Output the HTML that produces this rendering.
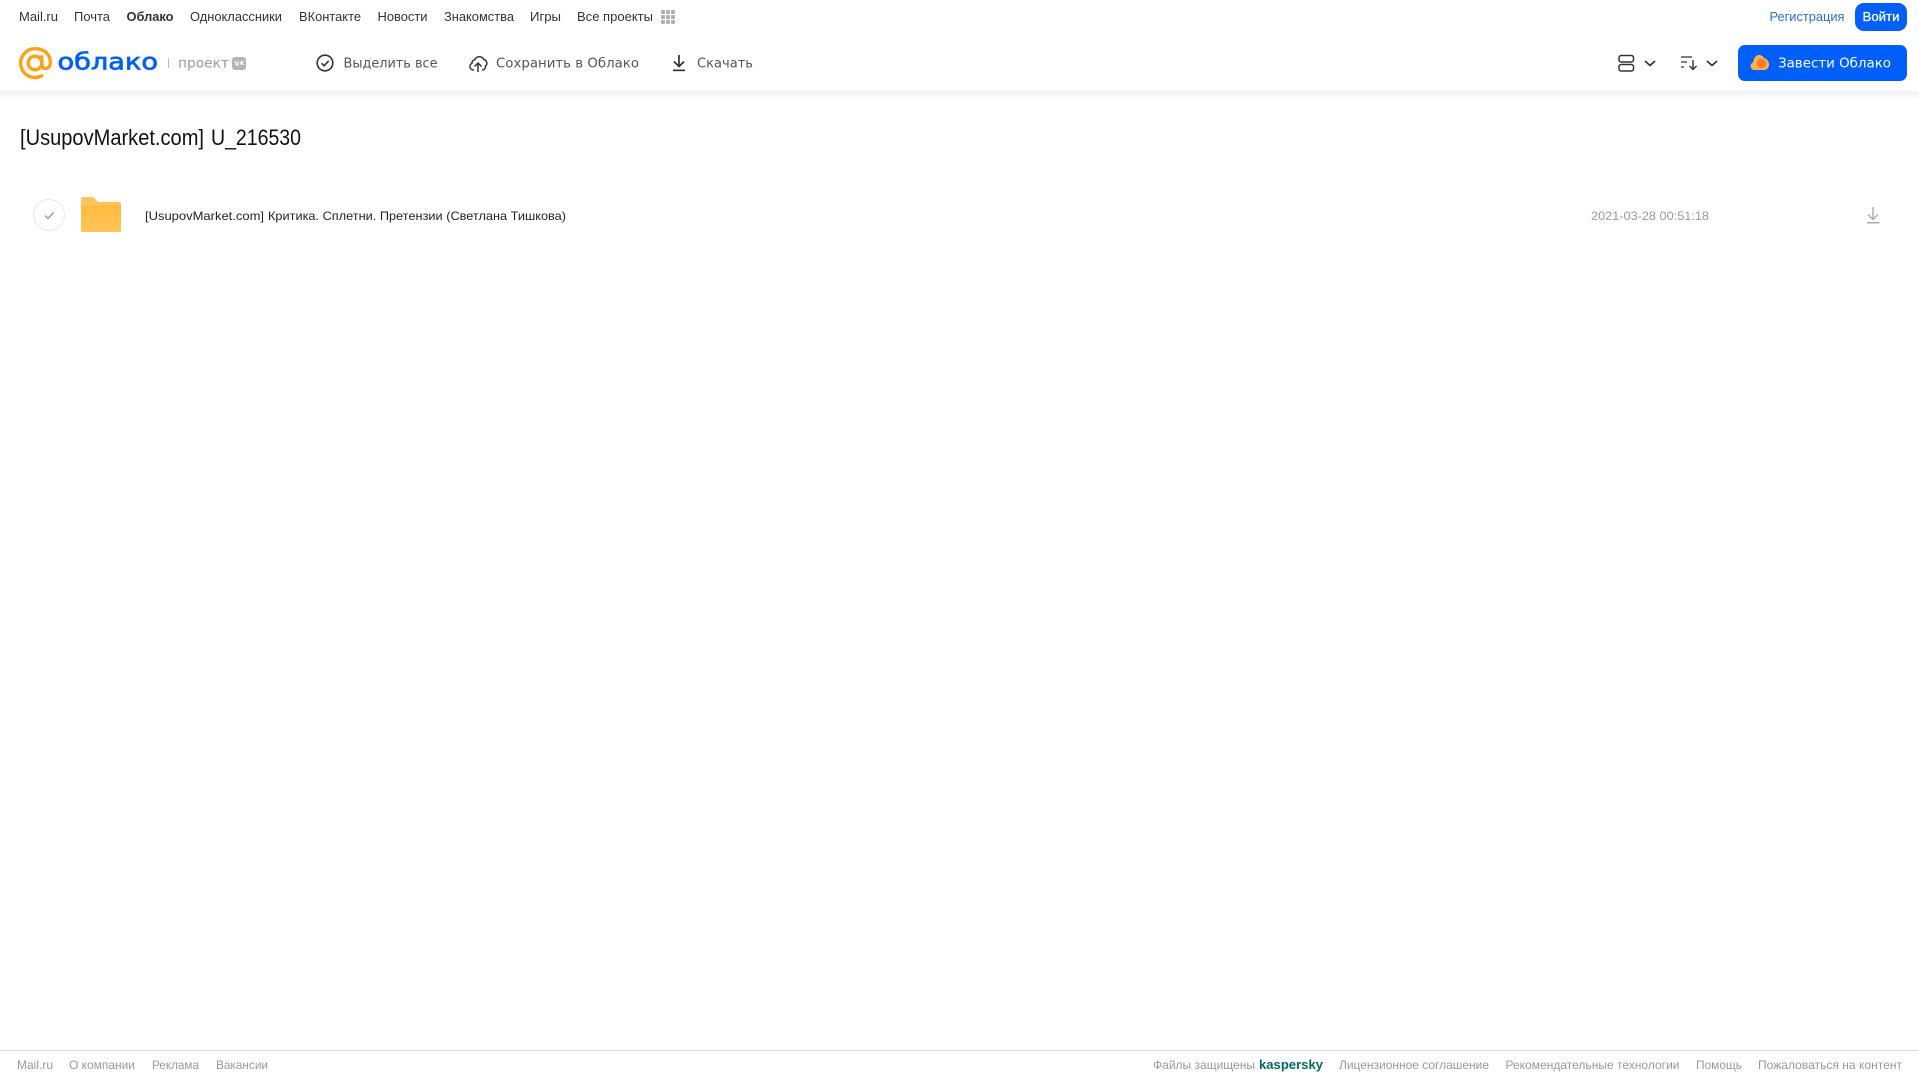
<!DOCTYPE html>
<html lang="ru">
<head>
<meta charset="utf-8">
<title>[UsupovMarket.com] U_216530</title>
<style>
html,body{margin:0;padding:0;width:1919px;height:1079px;overflow:hidden;background:#fff}
svg{display:block;position:absolute;left:0;top:0}
text{font-family:"Liberation Sans",sans-serif}
.nav{font-size:13px;fill:#333}
.act{font-family:"DejaVu Sans",sans-serif;font-size:13px;fill:#555}
.foot{font-size:12px;fill:#999}
</style>
</head>
<body>
<svg width="1919" height="1079" viewBox="0 0 1919 1079" xmlns="http://www.w3.org/2000/svg">
<defs>
<linearGradient id="sh" x1="0" y1="0" x2="0" y2="1"><stop offset="0" stop-color="#f0f0f0"/><stop offset="1" stop-color="#fff"/></linearGradient>
<linearGradient id="fb" x1="0" y1="0" x2="0" y2="1"><stop offset="0" stop-color="#ffbb3f"/><stop offset="1" stop-color="#ffc558"/></linearGradient>
</defs>
<rect width="1919" height="1079" fill="#fff"/>
<rect x="0" y="91" width="1919" height="9" fill="url(#sh)"/>

<!-- top nav -->
<text class="nav" x="19" y="21" textLength="39" lengthAdjust="spacingAndGlyphs">Mail.ru</text>
<text class="nav" x="74" y="21" textLength="36" lengthAdjust="spacingAndGlyphs">Почта</text>
<text class="nav" x="126.500" y="21" textLength="47" lengthAdjust="spacingAndGlyphs" font-weight="700" style="fill:#333">Облако</text>
<text class="nav" x="190" y="21" textLength="92" lengthAdjust="spacingAndGlyphs">Одноклассники</text>
<text class="nav" x="299" y="21" textLength="62" lengthAdjust="spacingAndGlyphs">ВКонтакте</text>
<text class="nav" x="377.500" y="21" textLength="50" lengthAdjust="spacingAndGlyphs">Новости</text>
<text class="nav" x="444" y="21" textLength="70" lengthAdjust="spacingAndGlyphs">Знакомства</text>
<text class="nav" x="530" y="21" textLength="31" lengthAdjust="spacingAndGlyphs">Игры</text>
<text class="nav" x="577" y="21" textLength="76" lengthAdjust="spacingAndGlyphs">Все проекты</text>
<g fill="#b0b0b0">
<rect x="661" y="10" width="4" height="4" rx="1"/><rect x="666" y="10" width="4" height="4" rx="1"/><rect x="671" y="10" width="4" height="4" rx="1"/>
<rect x="661" y="15" width="4" height="4" rx="1"/><rect x="666" y="15" width="4" height="4" rx="1"/><rect x="671" y="15" width="4" height="4" rx="1"/>
<rect x="661" y="20" width="4" height="4" rx="1"/><rect x="666" y="20" width="4" height="4" rx="1"/><rect x="671" y="20" width="4" height="4" rx="1"/>
</g>
<text class="nav" x="1769.500" y="21" textLength="75" lengthAdjust="spacingAndGlyphs" style="fill:#2a6fd6">Регистрация</text>
<rect x="1855" y="3" width="52" height="28" rx="9" fill="#005ff9"/>
<text x="1862.500" y="21" font-size="13" fill="#fff" stroke="#fff" stroke-width=".25" textLength="37" lengthAdjust="spacingAndGlyphs">Войти</text>

<!-- logo -->
<g fill="none" stroke="#ffa116" stroke-width="3.400" stroke-linecap="round">
<circle cx="35" cy="63" r="6.800"/>
<path d="M41.800 56.800v7.700c0 5.800 8.200 5.600 8.500-1.700c.3-8.600-6.300-14.100-15.300-14.100a14.400 14.400 0 1 0 6.800 27.100"/>
</g>
<text x="57.500" y="69.500" font-size="23" fill="#005ff9" stroke="#005ff9" stroke-width=".7" textLength="100.500" lengthAdjust="spacingAndGlyphs" style="font-family:'DejaVu Sans',sans-serif">облако</text>
<rect x="168" y="58" width="1" height="10" fill="#bbb"/>
<text x="178" y="67.500" font-size="13" fill="#a6a6a6" stroke="#a6a6a6" stroke-width=".2" textLength="51" lengthAdjust="spacingAndGlyphs" style="font-family:'DejaVu Sans',sans-serif">проект</text>
<rect x="232" y="57" width="14" height="13" rx="3" fill="#b5b5b5"/>
<path d="M235 61l1.700 4h1.300v-4M241 61v4M244 61l-2.500 2 2.500 2" stroke="#fff" stroke-width="1.100" fill="none"/>

<!-- actions -->
<circle cx="325" cy="63" r="7.800" fill="none" stroke="#333" stroke-width="1.600"/>
<path d="M321.500 63.200l2.600 2.600 4.600-5" fill="none" stroke="#333" stroke-width="1.600"/>
<text class="act" x="343.500" y="67.500" textLength="94" lengthAdjust="spacingAndGlyphs">Выделить все</text>
<path d="M474 70h-.5a3.500 3.500 0 0 1-1.500-6.700a3.300 3.300 0 0 1 2.800-3.600a5 5 0 0 1 9-.2a3.800 3.800 0 0 1 1.700 6.600a3.500 3.500 0 0 1-3 3.900h-.5" fill="none" stroke="#333" stroke-width="1.500"/>
<path d="M478 72v-9M474.500 66.500l3.500-3.500 3.500 3.500" fill="none" stroke="#333" stroke-width="1.500"/>
<text class="act" x="496" y="67.500" textLength="143" lengthAdjust="spacingAndGlyphs">Сохранить в Облако</text>
<path d="M679 55v11M674 61.500l5 5 5-5" fill="none" stroke="#333" stroke-width="1.700"/>
<rect x="673" y="69.500" width="12" height="1.700" fill="#333"/>
<text class="act" x="697" y="67.500" textLength="56" lengthAdjust="spacingAndGlyphs">Скачать</text>

<!-- view / sort -->
<g fill="none" stroke="#333" stroke-width="1.500">
<rect x="1619" y="55.500" width="14.500" height="6.500" rx="2.200"/>
<rect x="1619" y="64.500" width="14.500" height="6.500" rx="2.200"/>
<path d="M1645 61l5 4.500 5-4.500" stroke-width="1.700"/>
<path d="M1707 61l5 4.500 5-4.500" stroke-width="1.700"/>
<path d="M1681 57h11M1681 62h6M1681 67h3" stroke-width="1.300"/>
<path d="M1693 60v9M1689.500 66l3.500 3.500 3.500-3.500" stroke-width="1.400"/>
</g>
<rect x="1738" y="45" width="169" height="36" rx="7" fill="#005ff9"/>
<path d="M1755 70a4 4 0 0 1-3.500-6.500c.3-.5 1.800-1 2-2.500.5-3.500 2.700-6 5.500-6 2.500 0 4 1.200 5 3 3 .8 5 3.500 5 6.500 0 3-2 5.500-5 5.500z" fill="#ffb34d"/>
<circle cx="1761.500" cy="63.500" r="4.800" fill="#ff7a2f"/>
<text x="1778" y="67.500" fill="#fff" font-size="13" textLength="113" lengthAdjust="spacingAndGlyphs" style="font-family:'DejaVu Sans',sans-serif">Завести Облако</text>

<!-- title -->
<text x="20" y="145" font-size="22" fill="#111" textLength="184" lengthAdjust="spacingAndGlyphs">[UsupovMarket.com]</text>
<text x="211" y="145" font-size="22" fill="#111" textLength="90" lengthAdjust="spacingAndGlyphs">U_216530</text>

<!-- row -->
<circle cx="49" cy="215" r="15.500" fill="#fff" stroke="#e8e8e8" stroke-width="1"/>
<path d="M45 215.500l3 3 5.500-6" fill="none" stroke="#999" stroke-width="1.300"/>
<path d="M83 197h8c2 0 3 .7 4 1.800l3 3.200h21a2 2 0 0 1 2 2v26a2 2 0 0 1-2 2H83a2 2 0 0 1-2-2V199a2 2 0 0 1 2-2z" fill="#ffc55c"/>
<path d="M81 205h40v25a2 2 0 0 1-2 2H83a2 2 0 0 1-2-2z" fill="url(#fb)"/>
<text x="145" y="220" font-size="12" fill="#222" textLength="119" lengthAdjust="spacingAndGlyphs">[UsupovMarket.com]</text>
<text x="268" y="220" font-size="12" fill="#222" textLength="298" lengthAdjust="spacingAndGlyphs">Критика. Сплетни. Претензии (Светлана Тишкова)</text>
<text x="1591" y="220" font-size="12" fill="#999" textLength="118" lengthAdjust="spacingAndGlyphs">2021-03-28 00:51:18</text>
<path d="M1873 207v12M1868 214.500l5 5 5-5" fill="none" stroke="#aaa" stroke-width="1.400"/>
<rect x="1867" y="222" width="12.500" height="1.500" fill="#aaa"/>

<!-- footer -->
<rect x="0" y="1050" width="1919" height="1" fill="#d9d9d9"/>
<text class="foot" x="17" y="1069" textLength="36" lengthAdjust="spacingAndGlyphs">Mail.ru</text>
<text class="foot" x="69" y="1069" textLength="66" lengthAdjust="spacingAndGlyphs">О компании</text>
<text class="foot" x="152" y="1069" textLength="47" lengthAdjust="spacingAndGlyphs">Реклама</text>
<text class="foot" x="216" y="1069" textLength="52" lengthAdjust="spacingAndGlyphs">Вакансии</text>
<text class="foot" x="1153" y="1069" textLength="102" lengthAdjust="spacingAndGlyphs">Файлы защищены</text>
<text x="1259" y="1069" font-size="13" font-weight="700" fill="#006d5c" textLength="64" lengthAdjust="spacingAndGlyphs">kaspersky</text>
<text class="foot" x="1339" y="1069" textLength="150" lengthAdjust="spacingAndGlyphs">Лицензионное соглашение</text>
<text class="foot" x="1505.500" y="1069" textLength="174" lengthAdjust="spacingAndGlyphs">Рекомендательные технологии</text>
<text class="foot" x="1696" y="1069" textLength="46" lengthAdjust="spacingAndGlyphs">Помощь</text>
<text class="foot" x="1758" y="1069" textLength="144" lengthAdjust="spacingAndGlyphs">Пожаловаться на контент</text>
</svg>
</body>
</html>
